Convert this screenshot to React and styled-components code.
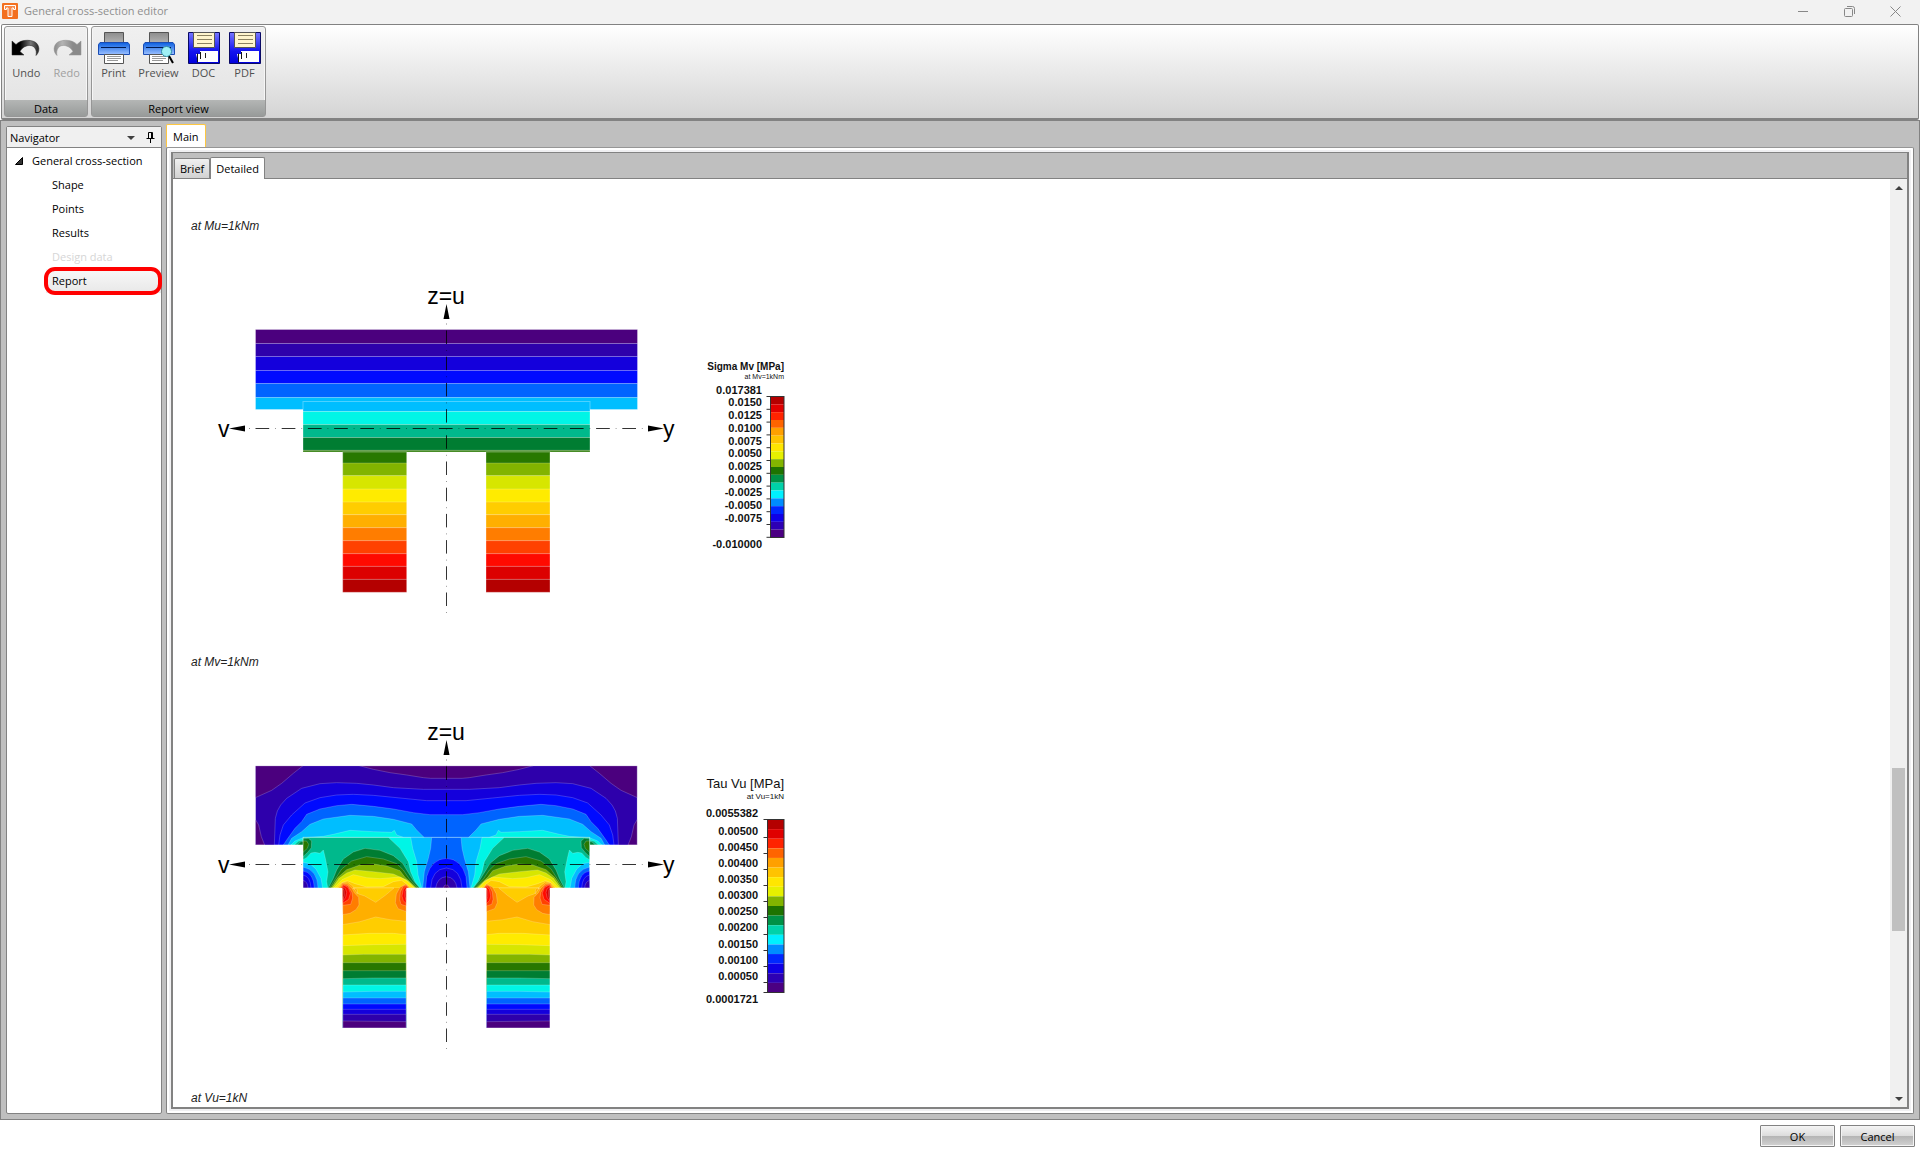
import React from 'react';
import styled, { createGlobalStyle, css } from 'styled-components';

const GlobalStyle = createGlobalStyle`
  * {
    box-sizing: border-box;
  }

  body {
    margin: 0;
    background: #fff;
    color: #000;
    font-family: "Open Sans", "Noto Sans", sans-serif;
    font-size: 11px;
    line-height: 16px;
  }

  button {
    font: inherit;
    color: inherit;
    padding: 0;
    border: 0;
    background: none;
  }
`

const Window = styled.div`
  display: flex;
  flex-direction: column;
  height: 100vh;
`

/* title bar */

const TitleBar = styled.header`
  display: flex;
  align-items: center;
  height: 24px;
  padding: 0 2px 2px;
  gap: 6px;
  background: #f2f2f2;
  color: #8f8f8f;

  h1 {
    flex: 1;
    margin: 0;
    font-size: 11px;
    font-weight: 400;
  }
`

const CaptionButtons = styled.div`
  display: flex;

  button {
    display: flex;
    align-items: center;
    justify-content: center;
    width: 46px;
    height: 20px;
  }
`

/* ribbon */

const Ribbon = styled.div`
  display: flex;
  gap: 3px;
  height: 96px;
  margin: 0 1px;
  padding: 1px 2px;
  border: 1px solid #828282;
  border-bottom-width: 2px;
  border-radius: 2px;
  background: linear-gradient(#fff, #d4d4d4);
`

const Group = styled.section`
  display: flex;
  flex-direction: column;
  justify-content: space-between;
  width: ${props => props.$width}px;
  border: 1px solid #969696;
  border-radius: 3px;
  background: linear-gradient(#f0f0f0, #e2e2e2);
  box-shadow: inset 0 0 0 1px #f6f6f6;

  h2 {
    margin: 0;
    height: 16px;
    line-height: 17px;
    background: linear-gradient(#b4b6b5, #989b9a);
    font-size: 11px;
    font-weight: 400;
    text-align: center;
  }
`

const Tools = styled.div`
  display: flex;
  padding: 5px 0 0 1px;
`

const Tool = styled.button`
  display: flex;
  flex-direction: column;
  align-items: center;
  gap: 1px;
  width: ${props => props.$wide ? 49 : 41}px;
  color: #505050;

  &:disabled {
    color: #a0a0a0;
  }
`

/* work area */

const Workspace = styled.div`
  flex: 1;
  display: flex;
  gap: 4px;
  min-height: 0;
  padding: 3px 5px 5px;
  border: 1px solid #828282;
  background: #bfbfbf;
`

const Navigator = styled.nav`
  width: 156px;
  margin-top: 2px;
  border: 1px solid #828282;
  border-radius: 2px;
  background: #fff;
`

const NavHeader = styled.div`
  display: flex;
  align-items: center;
  height: 21px;
  padding: 1px 6px 0 3px;
  border-bottom: 1px solid #828282;
  background: #f0f0f0;

  h2 {
    flex: 1;
    margin: 0;
    font-size: 11px;
    font-weight: 400;
  }

  button {
    display: flex;
    margin-left: 11px;
  }
`

const Tree = styled.ul`
  margin: 0;
  padding: 0;
  list-style: none;
`

const NavBody = styled.div`
  padding-top: 1px;
`

const TreeRoot = styled.button`
  display: flex;
  align-items: center;
  gap: 9px;
  height: 24px;
  padding-left: 8px;
`

const TreeItem = styled.button`
  position: relative;
  display: block;
  width: 115px;
  height: 24px;
  margin-left: 39px;
  padding-left: 6px;
  text-align: left;

  &:disabled {
    color: #d6d6d6;
  }

  ${props => props.$selected && css`
    background: linear-gradient(#f8f8f8, #e8e8e8);

    &::after {
      content: "";
      position: absolute;
      inset: -2px -1px -2px -2px;
      border: 4px solid #f00;
      border-radius: 11px;
    }
  `}
`

const Main = styled.main`
  flex: 1;
  display: flex;
  flex-direction: column;
  min-width: 0;
`

const MainTab = styled.button`
  align-self: flex-start;
  height: 23px;
  padding: 2px 6px 0;
  border: 1px solid #fdc741;
  border-bottom: 0;
  border-radius: 2px 2px 0 0;
  background: #fff;
`

const Pane = styled.div`
  flex: 1;
  display: flex;
  min-height: 0;
  padding: 4px;
  border: 1px solid #828282;
  border-top-color: #969696;
  border-radius: 2px;
  background: #f0f0f2;
  box-shadow: inset 0 0 0 2px #fff;
`

const Document = styled.div`
  flex: 1;
  display: flex;
  flex-direction: column;
  min-width: 0;
  border: 2px solid #828282;
  border-top-width: 1px;
  background: #bfbfbf;
`

const Tabs = styled.div`
  display: flex;
  align-items: flex-end;
  height: 26px;
  padding-left: 1px;
  border-bottom: 1px solid #828282;
`

const Tab = styled.button`
  height: ${props => props.$active ? 22 : 20}px;
  margin-bottom: ${props => props.$active ? -1 : 0}px;
  padding: 0 5px;
  border: 1px solid #828282;
  border-bottom: 0;
  border-radius: 2px 2px 0 0;
  background: ${props => props.$active ? '#fff' : 'linear-gradient(#f0f0f0, #d2d2d2)'};
`

const Viewer = styled.div`
  flex: 1;
  display: flex;
  min-height: 0;
  background: #fff;
`

const Report = styled.article`
  flex: 1;
  min-width: 0;
  overflow: hidden;
  padding: 39px 18px 0;

  svg {
    display: block;
  }
`

const Note = styled.p`
  margin: 0;
  font: italic 12px/16px "Liberation Sans", Arial, sans-serif;
  color: #222;
`

const ScrollBar = styled.div`
  display: flex;
  flex-direction: column;
  align-items: center;
  width: 17px;
  background: #f0f0f0;

  button {
    display: flex;
    align-items: center;
    justify-content: center;
    height: 17px;
  }
`

const Track = styled.div`
  flex: 1;
  display: flex;
  flex-direction: column;

  &::before {
    content: "";
    flex: 572;
  }

  &::after {
    content: "";
    flex: 159;
  }
`

const Thumb = styled.div`
  flex: 163;
  width: 13px;
  background: #c0c0c0;
`

const Footer = styled.footer`
  display: flex;
  justify-content: flex-end;
  gap: 5px;
  height: 30px;
  padding: 5px 5px 3px;
`

const DialogButton = styled.button`
  width: 75px;
  height: 22px;
  padding-top: 2px;
  border: 1px solid #828282;
  border-radius: 1px;
  background: linear-gradient(#f4f4f4, #dcdcdc 50%, #b4b4b4 50%, #d2d2d2);
  box-shadow: inset 0 0 0 1px #f4f4f4;
`

/* icons */

const AppIcon = () =>
  <svg width="16" height="16" viewBox="0 0 16 16" aria-hidden="true">
    <rect width="16" height="16" rx="1" fill="#f37021" />
    <path d="M2.5 2.5h11v4h-2v-1.500h-1.500v8.500h-4v-8.500h-1.500v1.500h-2z" fill="#f8894a" stroke="#fff" />
  </svg>

const ArrowIcon = ({ flip }) =>
  <svg width="32" height="32" viewBox="0 0 32 32" aria-hidden="true">
    <defs>
      <linearGradient id={flip ? 'redo' : 'undo'} x1="0" x2="1">
        <stop offset="0.3" stopColor={flip ? '#8a8a8a' : '#000'} />
        <stop offset="0.7" stopColor={flip ? '#b4b4b4' : '#777'} />
        <stop offset="1" stopColor={flip ? '#8a8a8a' : '#222'} />
      </linearGradient>
    </defs>
    <path
      transform={flip ? 'translate(32 0) scale(-1 1)' : undefined}
      d="M2 9v14h12l-4-3.500C13 13.500 21 11.500 24.500 15.500c2 2.500 2 5 1.500 8C30 20 30 13 25 10 19 7 10 8 6 12.500z"
      fill={`url(#${flip ? 'redo' : 'undo'})`}
      stroke={flip ? '#909090' : '#222'}
      strokeWidth="0.500"
    />
  </svg>

const PrinterIcon = ({ lens }) =>
  <svg width="32" height="32" viewBox="0 0 32 32" aria-hidden="true">
    <defs>
      <linearGradient id="body" x2="0" y2="1">
        <stop offset="0" stopColor="#0a5fe0" />
        <stop offset="1" stopColor="#9cc0ff" />
      </linearGradient>
      <linearGradient id="feed" x2="0" y2="1">
        <stop offset="0" stopColor="#8c8c8c" />
        <stop offset="1" stopColor="#b4b4b4" />
      </linearGradient>
    </defs>
    <path d="M6.500 0.500h19v11h-19z" fill="url(#feed)" stroke="#555" />
    <path d="M2 10.500h28l1.500 2v10h-31v-10z" fill="url(#body)" stroke="#1a4cb4" />
    <path d="M3 15.500h25" stroke="#001a50" />
    <path d="M6.500 22.500h19v9h-19z" fill="#fff" stroke="#555" />
    <path d="M9 24.500h14M9 26.500h14M9 28.500h11" stroke="#999" />
    {lens && <>
      <path d="M26 24l4 7" stroke="#000" strokeWidth="2" />
      <circle cx="23.500" cy="19.500" r="5" fill="#9ff0f5" stroke="#2d8ca5" />
    </>}
  </svg>

const DiskIcon = () =>
  <svg width="32" height="32" viewBox="0 0 32 32" aria-hidden="true">
    <defs>
      <linearGradient id="disk" x2="0" y2="1">
        <stop offset="0" stopColor="#7878ff" />
        <stop offset="0.600" stopColor="#1414f0" />
        <stop offset="1" stopColor="#0000dc" />
      </linearGradient>
    </defs>
    <path d="M0.500 0.500h31v31h-31z" fill="url(#disk)" stroke="#0a0a64" />
    <path d="M5.500 0.500h21v15h-21z" fill="#fff5cd" stroke="#555" />
    <path d="M9 3.500h15M9 7.500h15M9 11.500h15" stroke="#8c8260" />
    <path d="M8 22h4v-3h18v11H10z" fill="#fff" />
    <path d="M9.500 21.500v9M12.500 20v7" stroke="#111" />
    <path d="M17.500 21v5" stroke="#222" />
  </svg>

const Chevron = ({ down }) =>
  <svg width="8" height="4" viewBox="0 0 8 4" aria-hidden="true">
    <path d={down ? 'M0 0h8l-4 4z' : 'M0 4h8l-4-4z'} fill="#404040" />
  </svg>

/* section plots */

const rainbow = [
  '#4b007e', '#2e00ab', '#1400dc', '#000aff', '#0064ff', '#00beff', '#00f5e6',
  '#00b98c', '#007d32', '#287800', '#82b400', '#d7e600', '#ffeb00', '#ffcd00',
  '#ffaf00', '#ff7d00', '#ff4100', '#ff0a00', '#dc0000', '#b40000',
]

const scale = [
  '#b40000', '#e00000', '#ff2300', '#ff6400', '#ffa000', '#ffc300', '#ffe600',
  '#e6f000', '#82b400', '#1e7300', '#009146', '#00d2aa', '#00f0ff', '#008cff',
  '#0028ff', '#0f00e6', '#2d00b4', '#4b0082',
]

// stacked horizontal strips, edges has one entry more than there are strips
const Bands = ({ x, width, edges, first }) =>
  <g>
    {edges.slice(1).map((y, i) => (
      <rect key={y} x={x} y={edges[i]} width={width} height={y - edges[i]} fill={rainbow[first + i]} />
    ))}
    {edges.slice(1, -1).map(y => (
      <path key={y} d={`M${x} ${y}h${width}`} stroke="#fff" strokeOpacity="0.2" />
    ))}
    <rect x={x} y={edges[0]} width={width} height={edges[edges.length - 1] - edges[0]} fill="none" stroke="#fff" strokeOpacity="0.3" />
  </g>

const Axes = () =>
  <g fontFamily="Liberation Sans, Arial, sans-serif" fontSize="23">
    <path d="M446.500 330.500v283" stroke="#000" strokeOpacity="0.800" strokeDasharray="13.500 12.700" />
    <path d="M446.500 350v264" stroke="#000" strokeOpacity="0.400" strokeDasharray="1 25.200" />
    <path d="M255.500 428.500h389" stroke="#000" strokeOpacity="0.800" strokeDasharray="13.700 12.500" />
    <path d="M275 428.500h370" stroke="#000" strokeOpacity="0.400" strokeDasharray="1 25.200" />
    <path d="M446 324h1M249 428.500h1" stroke="#888" />
    <path d="M446.500 304l3 15h-6zM229 428.500l16-3v6zM664 428.500l-16-3v6z" />
    <text x="446" y="304" textAnchor="middle">z=u</text>
    <text x="218" y="437">v</text>
    <text x="663" y="437">y</text>
  </g>

const Legend = ({ title, bold, size, noteSize, note, titleY, noteY, labels, labelX, bar, ticks }) =>
  <g fontFamily="Liberation Sans, Arial, sans-serif" textAnchor="end" fill="#111">
    <text x="784" y={titleY} fontSize={size} fontWeight={bold ? 700 : 400}>{title}</text>
    <text x="784" y={noteY} fontSize={noteSize}>{note}</text>
    {labels.map(([text, y]) => (
      <text key={text} x={labelX} y={y} fontSize="11" fontWeight="700">{text}</text>
    ))}
    {scale.map((color, i) => {
      const step = bar.height / scale.length
      return <rect key={color} x={bar.x} y={bar.y + i * step} width={784 - bar.x} height={step} fill={color} />
    })}
    <rect x={bar.x} y={bar.y} width={784 - bar.x} height={bar.height} fill="none" stroke="#333" />
    {ticks.map(y => <path key={y} d={`M${bar.x - 4} ${y}h4`} stroke="#333" />)}
  </g>

const legEdges = [452, 463, 475.7, 489, 502, 514.7, 527.7, 540.7, 553.7, 566.3, 579.3, 592.3]

const sigmaLabels = [
  ['0.017381', 394], ['0.0150', 406], ['0.0125', 419], ['0.0100', 432], ['0.0075', 445],
  ['0.0050', 457], ['0.0025', 470], ['0.0000', 483], ['-0.0025', 496], ['-0.0050', 509],
  ['-0.0075', 522], ['-0.010000', 548],
]

const SigmaPlot = () =>
  <svg width="640" height="420" viewBox="191 234 640 420" role="img" aria-label="Sigma Mv">
    <Bands x={255.5} width={382} edges={[329.5, 343.5, 356.5, 370.5, 383.5, 397.5, 409.5]} first={0} />
    <Bands x={303} width={287} edges={[401.5, 411.5, 424.5, 437.5, 450.3, 452]} first={5} />
    <Bands x={342.700} width={64} edges={legEdges} first={9} />
    <Bands x={486} width={64} edges={legEdges} first={9} />
    <Axes />
    <Legend
      title="Sigma Mv [MPa]" bold size={10} titleY={370}
      note="at Mv=1kNm" noteSize={7} noteY={379}
      labels={sigmaLabels} labelX={762}
      bar={{ x: 770.5, y: 396.5, height: 141 }}
      ticks={sigmaLabels.map((_, i) => 396.5 + i * 12.8)}
    />
  </svg>

// left half of the shear field, the right half is its mirror image
const flange = [
  [0, 'M46 152H189L160 175 125 205 95 226 46 248Z'],
  [0, 'M46 313L56 330 64 365 74 390H46Z'],
  [0, 'M358 152L400 163 450 173 500 180 550 188 572 190H622V152Z'],
  [2, 'M103 390L106 310 112 288 122 270 140 250 185 220 240 206 290 203 350 205 400 210 460 218 550 223H622V390Z'],
  [3, 'M116 390L120 360 130 330 155 300 195 264 240 248 290 240 340 238 400 241 480 249 560 257H622V390Z'],
  [4, 'M130 390L140 375 165 340 185 320 200 298 240 282 290 272 335 268 400 274 460 282 520 293 570 299H622V390Z'],
  [5, 'M144 390L155 370 185 350 210 328 250 312 330 301 400 304 460 313 515 327 530 345 552 367V390Z'],
  [6, 'M153 390L165 378 190 368 250 364 280 358 330 346 400 350 455 352 463 346 470 360 490 367V390Z'],
  [7, 'M163 390L175 379 195 374V390Z'],
  [8, 'M172 390L182 381 195 378V390Z'],
]

const web = [
  [4, 'M575 367L572 400 565 430 553 470 548 519H622V367Z'],
  [3, 'M557 519L560 485Q574 432 619 430H622V519Z'],
  [2, 'M572 519Q575 462 619 459H622V519Z'],
  [1, 'M587 519Q592 487 619 485H622V519Z'],
  [0, 'M610 519Q612 510 619 509H622V519Z'],
  [6, 'M189 367H512L518 400 530 440 534 480 545 519H248L243 490 228 462 210 446 189 442Z'],
  [7, 'M189 367H445L480 400 505 440 512 470 525 500 540 519H263L260 500 264 470 256 430 250 405 240 415 225 412 213 414 200 428 189 434Z'],
  [8, 'M189 372L205 370 215 378 214 398 203 412 189 425Z'],
  [9, 'M189 378L200 378 206 388 202 400 189 412Z'],
  [4, 'M189 456Q233 464 234 519H189Z'],
  [3, 'M189 468Q221 472 223 519H189Z'],
  [2, 'M189 480Q211 484 213 519H189Z'],
  [1, 'M189 496Q203 500 204 519H189Z'],
  [8, 'M265 519L280 490 290 465 310 432 340 411 375 400 420 406 460 422 488 445 500 465 520 497 538 519Z'],
  [9, 'M269 519L287 490 305 462 335 438 380 425 430 432 470 446 490 465 508 492 534 519Z'],
  [10, 'M273 519L293 488 320 464 360 450 400 447 440 453 480 467 495 487 530 519Z'],
  [11, 'M277 519L298 490 320 474 345 465 400 470 460 477 500 495 526 519Z'],
  [12, 'M282 519L306 494 340 479 380 488 420 491 480 486 505 500 522 519Z'],
  [13, 'M290 519L305 503 322 497 345 506 380 516 430 515 460 500 485 496 515 519Z'],
]

const legTop = [
  [13, 'M100 54L116 72 134 78 167 97 196 76 222 54Z'],
  [14, 'M56 55L66 38 82 36 98 48 112 72V60L108 55Z'],
  [15, 'M60 55L68 40 82 42 97 56 103 68 116 82 117 105 108 119 90 130 68 134ZM259 125L234 116 226 98 229 72 240 52 258 42 268 55H259Z'],
  [16, 'M62 55L70 43 84 47 96 68 98 84 92 103 68 106ZM259 108L243 103 239 88 241 66 250 48 262 47 264 55H259Z'],
  [17, 'M64 55L72 46 85 53 91 70 86 88 68 100ZM259 101L250 92 246 78 250 58 258 50 262 55H259Z'],
  [18, 'M68 52L76 55 80 67 77 82 68 95ZM259 92L255 80 255 65 259 56Z'],
  [19, 'M68 55L72 62 73 76 68 90Z'],
]

const legBands = [
  [13, 'M68 164L120 155 167 141 210 149 259 154V480H68Z'],
  [12, 'M68 195L150 190 220 190 259 194V480H68Z'],
  [11, 'M68 227L160 224 259 223V480H68Z'],
  [10, 'M68 255L130 253H259V480H68Z'],
  [9, 'M68 278H259V480H68Z'],
  [8, 'M68 302H259V480H68Z'],
  [7, 'M68 326L160 324H259V480H68Z'],
  [6, 'M68 345H259V480H68Z'],
  [5, 'M68 366L160 364H259V480H68Z'],
  [4, 'M68 384H259V480H68Z'],
  [3, 'M68 402H259V480H68Z'],
  [2, 'M68 418H259V480H68Z'],
  [1, 'M68 433H259V480H68Z'],
  [0, 'M68 453L259 455V480H68Z'],
]

const Contours = ({ shapes }) => shapes.map(([color, d]) => (
  <path key={d} d={d} fill={rainbow[color]} stroke="#fff" strokeOpacity="0.3" strokeWidth="2" />
))

const ShearHalf = () =>
  <g>
    <g transform="translate(240 279) scale(0.33333)">
      <g clipPath="url(#flange)">
        <path d="M46 152H622V390H46Z" fill={rainbow[1]} />
        <Contours shapes={flange} />
      </g>
      <g clipPath="url(#web)">
        <path d="M189 367H622V519H189Z" fill={rainbow[5]} />
        <Contours shapes={web} />
      </g>
      <path d="M619 152H46V390H189M619 367H189V519H308M499 519H619" fill="none" stroke="#fff" strokeOpacity="0.4" strokeWidth="3" />
    </g>
    <g transform="translate(320 434) scale(0.33333)">
      <g clipPath="url(#leg)">
        <path d="M68 54H259V474H68Z" fill={rainbow[14]} />
        <Contours shapes={legTop} />
        <Contours shapes={legBands} />
      </g>
      <path d="M68 56V474H259V56" fill="none" stroke="#fff" strokeOpacity="0.4" strokeWidth="3" />
    </g>
  </g>

const tauLabels = [
  ['0.0055382', 381], ['0.00500', 399], ['0.00450', 415], ['0.00400', 431], ['0.00350', 447],
  ['0.00300', 463], ['0.00250', 479], ['0.00200', 495], ['0.00150', 512], ['0.00100', 528],
  ['0.00050', 544], ['0.0001721', 567],
]

const TauPlot = () =>
  <svg width="640" height="420" viewBox="191 234 640 420" role="img" aria-label="Tau Vu">
    <defs>
      <clipPath id="flange"><path d="M46 152H620V390H46Z" /></clipPath>
      <clipPath id="web"><path d="M189 367H620V519H189Z" /></clipPath>
      <clipPath id="leg"><path d="M0 0H350V54H259V474H68V54H0Z" /></clipPath>
    </defs>
    <ShearHalf />
    <g transform="translate(892.700 0) scale(-1 1)">
      <ShearHalf />
    </g>
    <Axes />
    <Legend
      title="Tau Vu [MPa]" size={13} titleY={352}
      note="at Vu=1kN" noteSize={8} noteY={363}
      labels={tauLabels} labelX={758}
      bar={{ x: 767.5, y: 383.5, height: 173 }}
      ticks={[383.5, 401.5, 417.5, 433.5, 449.5, 465.5, 481.5, 498.5, 514.5, 530.5, 546.5, 556.5]}
    />
  </svg>

export default () =>
  <Window>
    <GlobalStyle />
    <TitleBar>
      <AppIcon />
      <h1>General cross-section editor</h1>
      <CaptionButtons>
        <button aria-label="Minimize">
          <svg width="10" height="10" stroke="#888"><path d="M0 5.500h10" /></svg>
        </button>
        <button aria-label="Restore">
          <svg width="11" height="11" fill="none" stroke="#888">
            <rect x="0.500" y="2.500" width="8" height="8" rx="1" />
            <path d="M3 0.500h5.500q2 0 2 2V8" />
          </svg>
        </button>
        <button aria-label="Close">
          <svg width="11" height="11" stroke="#888"><path d="M0.500 0.500l10 10M10.500 0.500l-10 10" /></svg>
        </button>
      </CaptionButtons>
    </TitleBar>

    <Ribbon>
      <Group $width={84}>
        <Tools>
          <Tool><ArrowIcon />Undo</Tool>
          <Tool disabled><ArrowIcon flip />Redo</Tool>
        </Tools>
        <h2>Data</h2>
      </Group>
      <Group $width={175}>
        <Tools>
          <Tool><PrinterIcon />Print</Tool>
          <Tool $wide><PrinterIcon lens />Preview</Tool>
          <Tool><DiskIcon />DOC</Tool>
          <Tool><DiskIcon />PDF</Tool>
        </Tools>
        <h2>Report view</h2>
      </Group>
    </Ribbon>

    <Workspace>
      <Navigator>
        <NavHeader>
          <h2>Navigator</h2>
          <button aria-label="Window position"><Chevron down /></button>
          <button aria-label="Auto hide">
            <svg width="9" height="11" fill="none" stroke="#000">
              <path d="M2.500 0.500h4v6h-4zM5.500 0.500v6M0.500 6.500h8M4.500 7v4" />
            </svg>
          </button>
        </NavHeader>
        <NavBody>
          <Tree>
            <li>
              <TreeRoot>
                <svg width="8" height="8"><path d="M7.500 0.500v7h-7z" fill="#333" stroke="#000" /></svg>
                General cross-section
              </TreeRoot>
              <Tree>
                <li><TreeItem>Shape</TreeItem></li>
                <li><TreeItem>Points</TreeItem></li>
                <li><TreeItem>Results</TreeItem></li>
                <li><TreeItem disabled>Design data</TreeItem></li>
                <li><TreeItem $selected>Report</TreeItem></li>
              </Tree>
            </li>
          </Tree>
        </NavBody>
      </Navigator>

      <Main>
        <MainTab>Main</MainTab>
        <Pane>
          <Document>
            <Tabs>
              <Tab>Brief</Tab>
              <Tab $active>Detailed</Tab>
            </Tabs>
            <Viewer>
              <Report>
                <Note>at Mu=1kNm</Note>
                <SigmaPlot />
                <Note>at Mv=1kNm</Note>
                <TauPlot />
                <Note>at Vu=1kN</Note>
              </Report>
              <ScrollBar>
                <button aria-label="Scroll up"><Chevron /></button>
                <Track><Thumb /></Track>
                <button aria-label="Scroll down"><Chevron down /></button>
              </ScrollBar>
            </Viewer>
          </Document>
        </Pane>
      </Main>
    </Workspace>

    <Footer>
      <DialogButton>OK</DialogButton>
      <DialogButton>Cancel</DialogButton>
    </Footer>
  </Window>
